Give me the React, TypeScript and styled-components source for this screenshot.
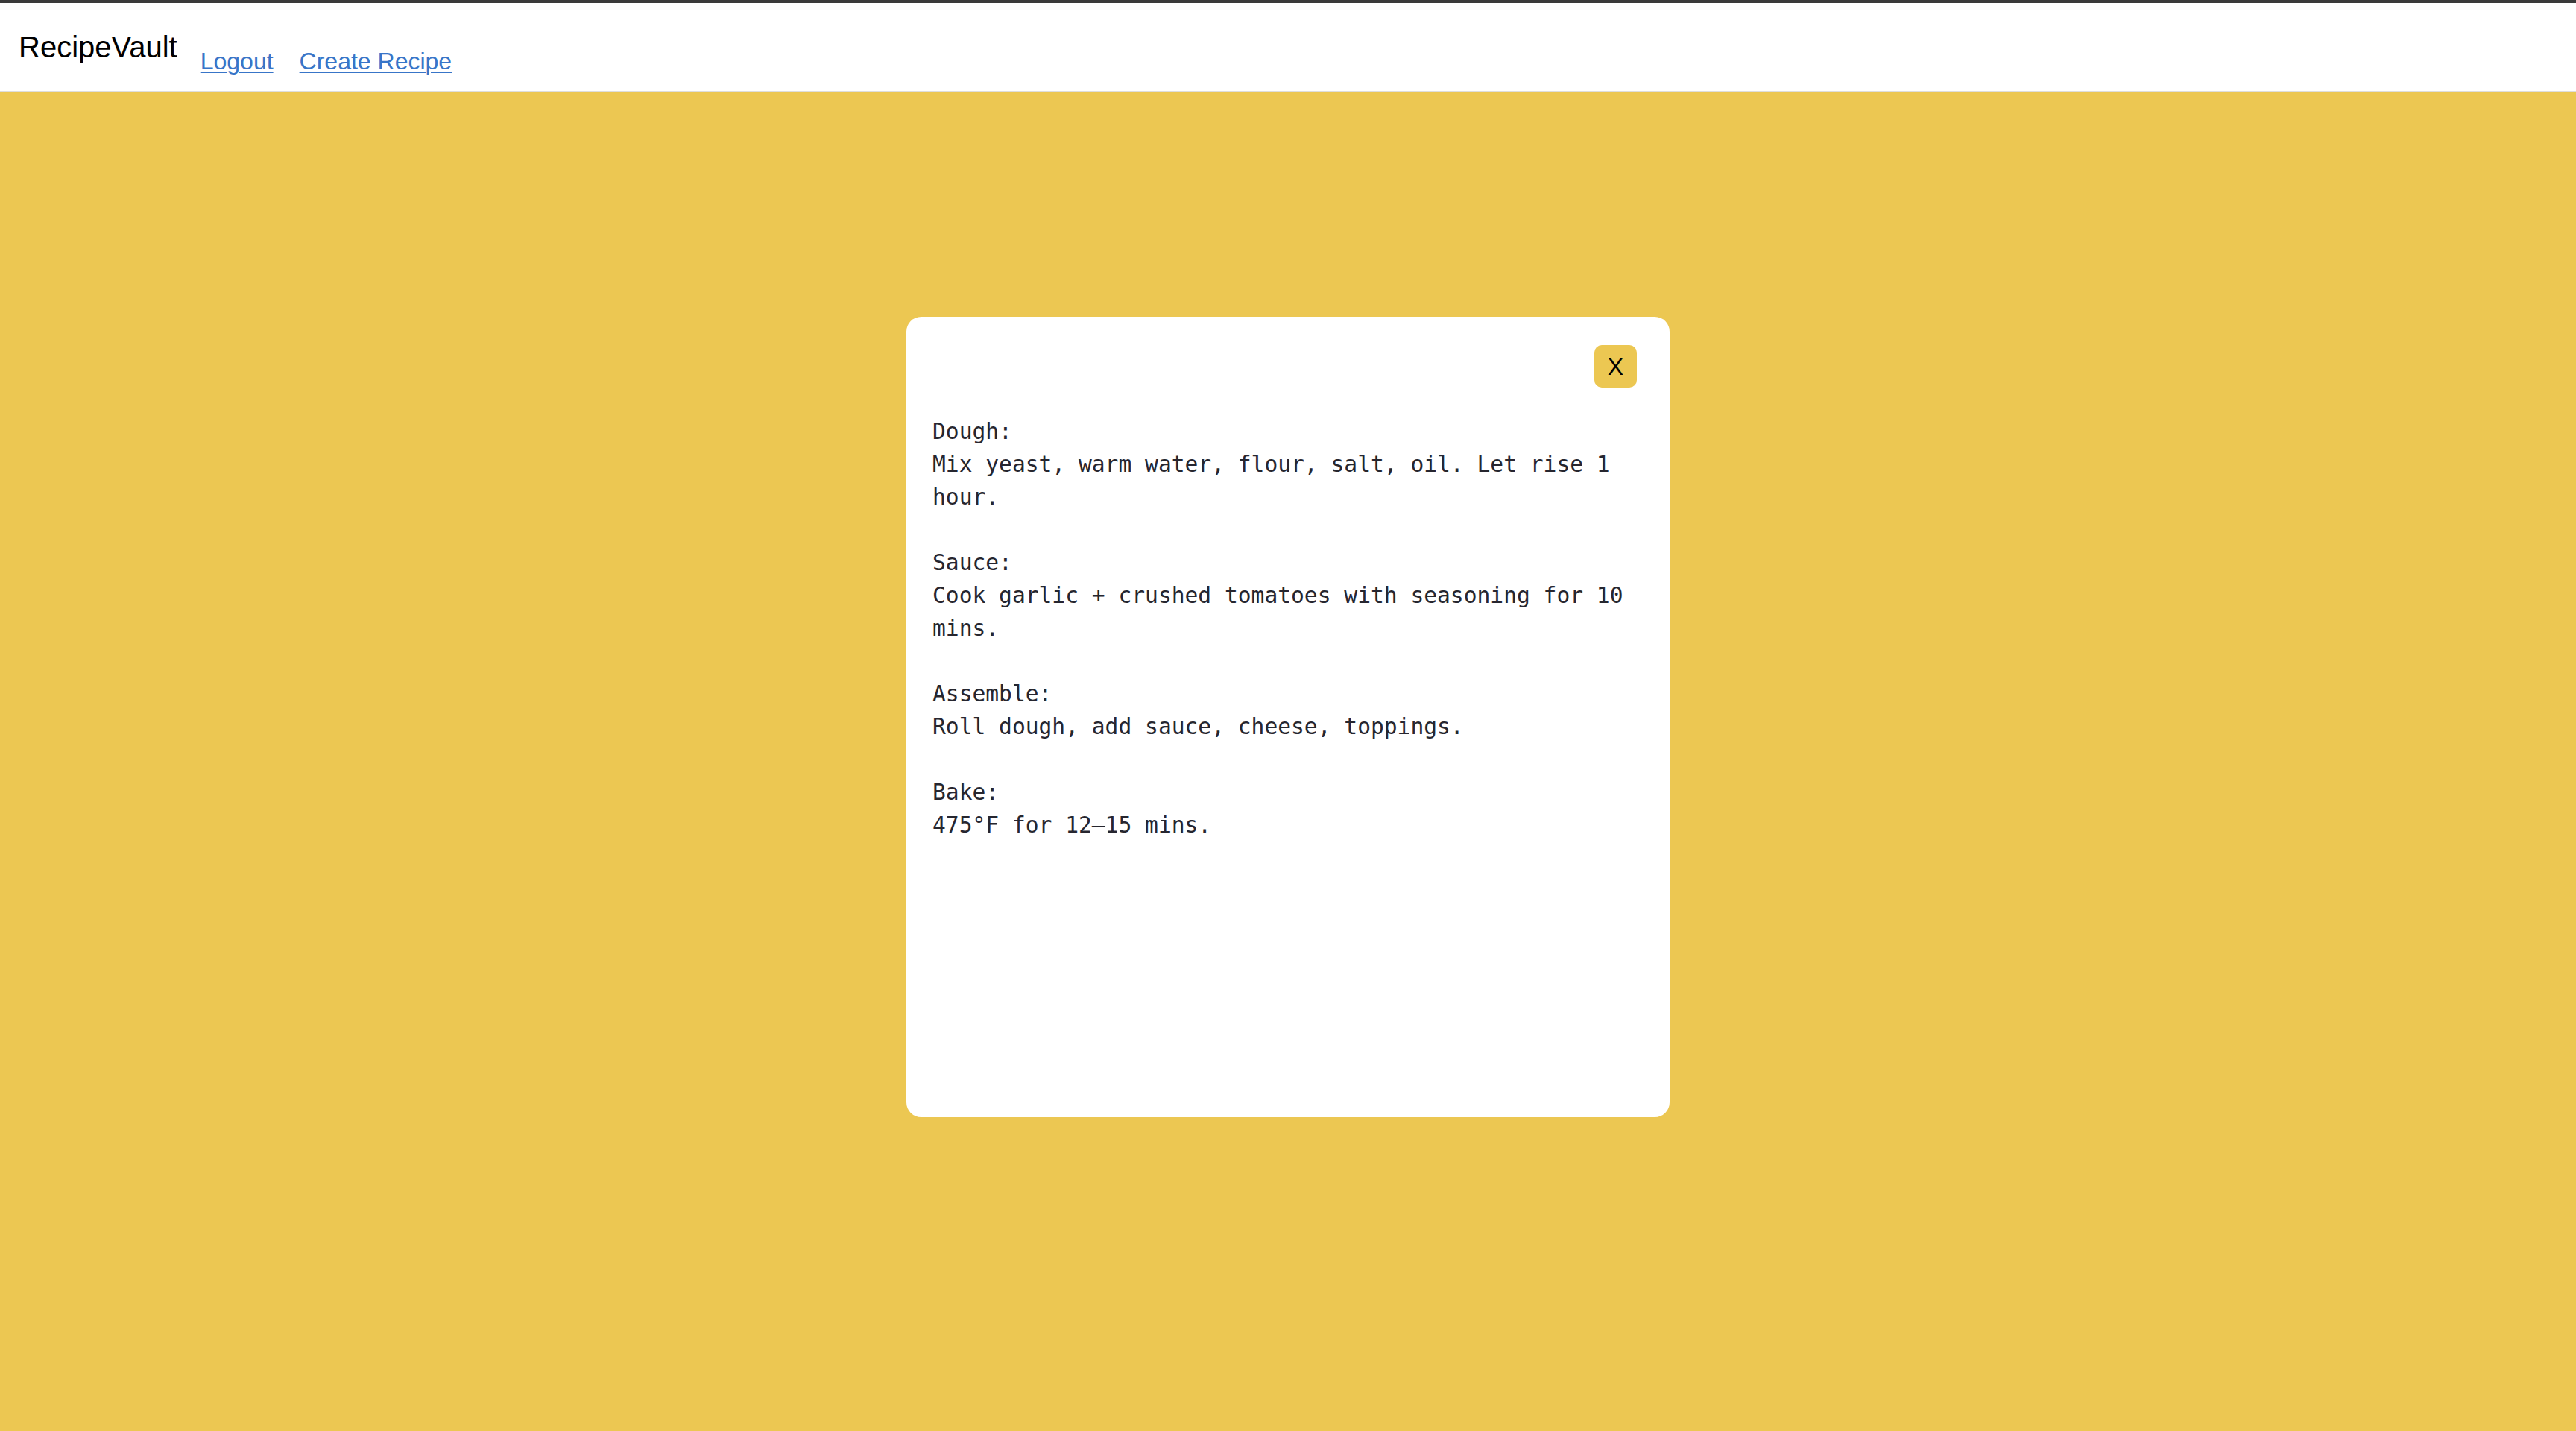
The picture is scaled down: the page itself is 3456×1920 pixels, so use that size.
import React from "react";
import styled, { createGlobalStyle } from "styled-components";

const GlobalStyle = createGlobalStyle`
  html, body {
    margin: 0;
    padding: 0;
    background: #ecc752;
  }
  * { box-sizing: border-box; }
`;

const Page = styled.div`
  min-height: 100vh;
  display: flex;
  flex-direction: column;
  background: #ecc752;
`;

const Header = styled.header`
  display: flex;
  align-items: flex-start;
  height: 124px;
  padding: 37px 25px 0;
  background: #ffffff;
  border-top: 4px solid #3a3a3a;
  border-bottom: 2px solid #dedede;
`;

const Logo = styled.div`
  font-family: "Liberation Sans", Arial, sans-serif;
  font-size: 40px;
  color: #000;
  margin-right: 31px;
`;

const Nav = styled.nav`
  display: flex;
  gap: 35px;
  margin-top: 23px;
`;

const NavLink = styled.a`
  font-family: "Liberation Sans", Arial, sans-serif;
  font-size: 32px;
  color: #3875c8;
  text-decoration: underline;
  text-underline-offset: 3px;
  text-decoration-thickness: 2px;
  cursor: pointer;
`;

const Main = styled.main`
  flex: 1;
  display: flex;
  justify-content: center;
  align-items: flex-start;
  padding-top: 301px;
`;

const Modal = styled.div`
  width: 1024px;
  height: 1074px;
  background: #ffffff;
  border-radius: 20px;
  padding: 38px 44px 0 35px;
  display: flex;
  flex-direction: column;
`;

const CloseRow = styled.div`
  display: flex;
  justify-content: flex-end;
`;

const CloseButton = styled.button`
  width: 57px;
  height: 57px;
  border: none;
  border-radius: 10px;
  background: #ecc752;
  color: #000;
  font-family: "Liberation Sans", Arial, sans-serif;
  font-size: 32px;
  line-height: 1;
  padding: 0;
  cursor: pointer;
`;

const Body = styled.div`
  margin-top: 37px;
  display: flex;
  flex-direction: column;
  gap: 44px;
  font-family: "DejaVu Sans Mono", Menlo, monospace;
  font-size: 29.6px;
  line-height: 44px;
  color: #26262f;
`;

const Section = styled.div`
  white-space: pre-wrap;
`;

const steps = [
  { label: "Dough:", text: "Mix yeast, warm water, flour, salt, oil. Let rise 1 hour." },
  { label: "Sauce:", text: "Cook garlic + crushed tomatoes with seasoning for 10 mins." },
  { label: "Assemble:", text: "Roll dough, add sauce, cheese, toppings." },
  { label: "Bake:", text: "475°F for 12–15 mins." },
];

export default function App() {
  return (
    <>
      <GlobalStyle />
      <Page>
        <Header>
          <Logo>RecipeVault</Logo>
          <Nav>
            <NavLink>Logout</NavLink>
            <NavLink>Create Recipe</NavLink>
          </Nav>
        </Header>
        <Main>
          <Modal>
            <CloseRow>
              <CloseButton>X</CloseButton>
            </CloseRow>
            <Body>
              {steps.map((s) => (
                <Section key={s.label}>
                  <div>{s.label}</div>
                  <div>{s.text}</div>
                </Section>
              ))}
            </Body>
          </Modal>
        </Main>
      </Page>
    </>
  );
}
